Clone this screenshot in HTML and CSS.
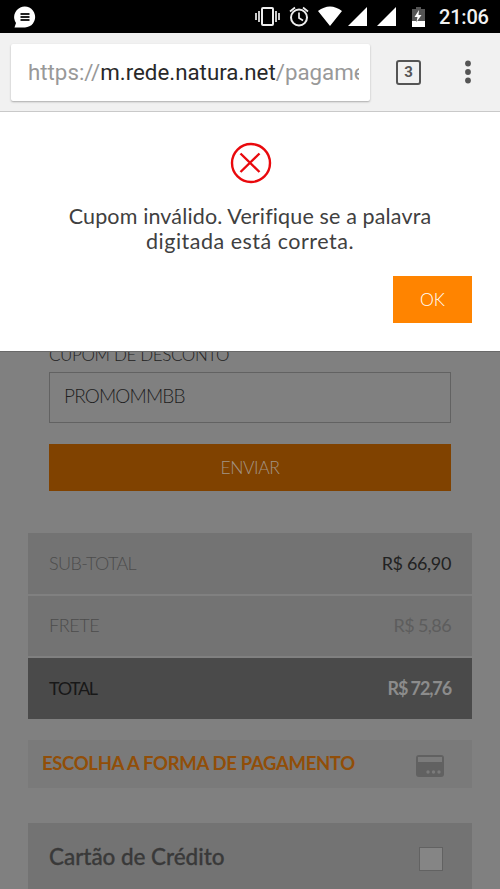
FILE: index.html
```html
<!DOCTYPE html>
<html lang="pt-BR">
<head>
<meta charset="utf-8">
<title>Pagamento</title>
<link rel="stylesheet" href="styles.css">
</head>
<body>
<header class="status">
  <svg class="chat" width="24" height="24" viewBox="0 0 24 24"><path d="M1.500 22.500L3 18A10.500 10.500 0 1 1 12 22.500Z" fill="#fff"/><path d="M7.500 9h9M7.500 12h9M7.500 15h9" stroke="#222" stroke-width="2"/></svg>
  <svg class="system" width="180" height="33" viewBox="0 0 180 33">
    <g fill="none" stroke="#eee">
      <rect x="8" y="8" width="11" height="17" rx="1" stroke-width="2"/>
      <path d="M2 13v7M5 11v11M22 11v11M25 13v7" stroke-width="1.700"/>
      <circle cx="45" cy="17.500" r="8" stroke-width="2"/>
      <path d="M45 12.500v5.500l4 2.500M36 11.500l5-4M54 11.500l-5-4" stroke-width="1.700"/>
    </g>
    <path fill="#fff" d="M64 11Q76 2 88 11L76 26ZM94 26L113 7v19ZM123 26L142 7v19Z"/>
    <path fill="#555" d="M158 9h4V7h5v2h4v12h-13z"/>
    <path fill="#fff" d="M158 21h13v6h-13zM165 10l-4.500 7h3l-1 5 5-7h-3z"/>
  </svg>
  <span class="time">21:06</span>
</header>
<nav class="toolbar">
  <div class="address"><span class="url">https://<b>m.rede.natura.net</b>/pagame</span></div>
  <span class="tabs">3</span>
  <svg class="more" width="8" height="26" viewBox="0 0 8 26" fill="#555"><circle cx="4" cy="4.500" r="2.900"/><circle cx="4" cy="13" r="2.900"/><circle cx="4" cy="21.500" r="2.900"/></svg>
</nav>
<section class="dialog">
  <svg class="error" width="42" height="42" viewBox="0 0 42 42" fill="none" stroke="#e9090d" stroke-width="2.400"><circle cx="21" cy="21" r="19"/><path d="M10.500 11.500l19 18.500M29.500 11.500l-19 18.500"/></svg>
  <p class="message"><span class="line1">Cupom inválido. Verifique se a palavra</span><br><span class="line2">digitada está correta.</span></p>
  <button class="ok">OK</button>
</section>
<main class="page">
  <div class="coupon">
    <div class="label"><span>CUPOM DE DESCONTO</span></div>
    <div class="field"><span>PROMOMMBB</span></div>
    <button class="send"><span>ENVIAR</span></button>
  </div>
  <div class="totals">
    <div class="row"><span class="sub-label">SUB-TOTAL</span><span class="sub-value">R$ 66,90</span></div>
    <div class="row"><span class="ship-label">FRETE</span><span class="ship-value">R$ 5,86</span></div>
    <div class="row total"><span class="total-label">TOTAL</span><span class="total-value">R$ 72,76</span></div>
  </div>
  <div class="heading"><span>ESCOLHA A FORMA DE PAGAMENTO</span>
    <svg width="28" height="22" viewBox="0 0 28 22"><rect width="28" height="22" rx="3" fill="#616161"/><path d="M2 2h24v5H2z" fill="#7b7b7b"/><g fill="#7b7b7b"><circle cx="12" cy="17" r="1.700"/><circle cx="17.500" cy="17" r="1.700"/><circle cx="23" cy="17" r="1.700"/></g></svg>
  </div>
  <div class="option"><span>Cartão de Crédito</span><i class="check"></i></div>
</main>
</body>
</html>
```
FILE: styles.css
```css
* { box-sizing: border-box; }
body { margin: 0; width: 500px; height: 889px; overflow: hidden; display: flex; flex-direction: column; background: #808080; font-family: Lato, sans-serif; font-weight: 300; }
svg { display: block; flex: none; }
button { border: 0; border-radius: 0; font: inherit; padding: 0; }
span { white-space: nowrap; }

.status { height: 33px; flex: none; background: #000; display: flex; align-items: center; padding: 0 11px 0 13px; }
.system { margin-left: auto; margin-right: 5px; }
.time { width: 50px; color: #f2f2f2; font: 500 20px/34px Roboto, sans-serif; letter-spacing: -.2px; }

.toolbar { height: 79px; flex: none; background: #f1f1f1; border-bottom: 1px solid #c9c9c9; display: flex; align-items: center; padding: 0 28px 0 11px; }
.address { width: 359px; height: 57px; background: #fff; border-radius: 2px; box-shadow: 0 1px 2px #aaa; padding: 0 11px 0 17px; }
.url { display: block; overflow: hidden; color: #999; font: 400 22.300px/57px Roboto, sans-serif; }
.url b { font-weight: 400; color: #292929; }
.tabs { width: 25px; height: 25px; margin-left: 26px; border: 2px solid #555; border-radius: 3px; color: #555; text-align: center; font: 700 15px/21px Roboto, sans-serif; }
.more { margin-left: auto; }

.dialog { height: 239px; flex: none; background: #fff; display: flex; flex-direction: column; align-items: center; padding: 30px 28px 0; }
.error { position: relative; left: .5px; }
.message { margin: 20px 0 0; text-align: center; color: #404040; font-size: 21.500px; line-height: 25px; font-weight: 400; }
.line1 { letter-spacing: .14px; }
.line2 { letter-spacing: .5px; }
.ok { width: 79px; height: 47px; margin-top: 22px; align-self: flex-end; background: #ff8400; color: #fff; font-size: 17.500px; }

.page { flex: 1; padding: 0 28px; border-top: 1px solid #696969; }
.coupon { padding: 0 21px; }
.label { height: 20px; overflow: hidden; color: #222; font-size: 17px; letter-spacing: -.38px; }
.label span { display: block; line-height: 20px; margin-top: -7px; }
.field { height: 51px; border: 1px solid #626262; padding-left: 14px; color: #202020; font-size: 19px; line-height: 46px; letter-spacing: -.85px; }
.send { display: block; width: 100%; height: 47px; margin-top: 21px; background: #804200; color: #a39485; font-size: 17.500px; letter-spacing: -.4px; }

.totals { margin-top: 42px; display: flex; flex-direction: column; gap: 2px; }
.row { height: 61px; background: #737373; display: flex; align-items: center; justify-content: space-between; padding: 0 21px 2px; font-size: 18px; color: #4c4c4c; }
.row + .row { height: 60px; }
.sub-label { letter-spacing: -.65px; }
.sub-value { color: #222; font-weight: 400; letter-spacing: -.35px; }
.ship-label { letter-spacing: -.4px; }
.ship-value { font-weight: 400; color: #5d5d5d; letter-spacing: -.6px; }
.row.total { height: 61px; background: #4a4a4a; color: #181818; }
.total-label { font-weight: 400; letter-spacing: -1.400px; }
.total-value { color: #8c8c8c; font-weight: 700; letter-spacing: -1.120px; }
.heading { height: 48px; margin-top: 21px; background: #7a7a7a; display: flex; align-items: center; justify-content: space-between; padding: 0 28px 0 14px; color: #914e08; font-size: 18.500px; font-weight: 700; letter-spacing: -.33px; }
.heading span { position: relative; top: -1px; }
.heading svg { margin-top: 3px; }
.option { height: 71px; margin-top: 35px; background: #737373; display: flex; align-items: center; justify-content: space-between; padding: 0 29px 0 21px; color: #393939; font-size: 22.500px; font-weight: 500; -webkit-text-stroke: .3px #393939; }
.option span { position: relative; top: -2px; letter-spacing: -.05px; }
.check { width: 24px; height: 24px; border: 1px solid #626262; background: #858585; }
```
